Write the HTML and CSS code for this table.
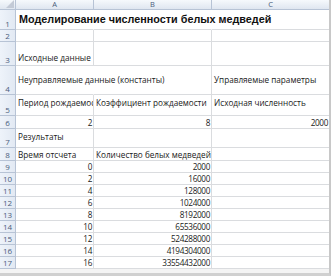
FILE: index.html
```html
<!DOCTYPE html>
<html>
<head>
<meta charset="utf-8">
<link rel="stylesheet" href="styles.css">
</head>
<body>
<div class="sheet">
  <div class="grid">
    <div class="hd corner"><svg class="tri" width="9" height="8" viewBox="0 0 9 8"><polygon points="9,0 9,8 1,8" fill="#c3cad6"/></svg></div>
    <div class="hd col">A</div>
    <div class="hd col">B</div>
    <div class="hd col">C</div>

    <div class="hd rn">1</div>
    <div class="c title nob">Моделирование численности белых медведей</div>
    <div class="c nob"></div>
    <div class="c"></div>

    <div class="hd rn">2</div>
    <div class="c"></div><div class="c"></div><div class="c"></div>

    <div class="hd rn">3</div>
    <div class="c bottom">Исходные данные</div>
    <div class="c"></div><div class="c"></div>

    <div class="hd rn">4</div>
    <div class="c mid nob">Неуправляемые данные (константы)</div>
    <div class="c"></div>
    <div class="c mid">Управляемые параметры</div>

    <div class="hd rn">5</div>
    <div class="c top clip">Период рождаемос</div>
    <div class="c top">Коэффициент рождаемости</div>
    <div class="c top">Исходная численность</div>

    <div class="hd rn">6</div>
    <div class="c num">2</div>
    <div class="c num">8</div>
    <div class="c num">2000</div>

    <div class="hd rn">7</div>
    <div class="c top">Результаты</div>
    <div class="c"></div><div class="c"></div>

    <div class="hd rn">8</div>
    <div class="c">Время отсчета</div>
    <div class="c">Количество белых медведей</div>
    <div class="c"></div>

    <div class="hd rn">9</div><div class="c num">0</div><div class="c num">2000</div><div class="c"></div>
    <div class="hd rn">10</div><div class="c num">2</div><div class="c num">16000</div><div class="c"></div>
    <div class="hd rn">11</div><div class="c num">4</div><div class="c num">128000</div><div class="c"></div>
    <div class="hd rn">12</div><div class="c num">6</div><div class="c num">1024000</div><div class="c"></div>
    <div class="hd rn">13</div><div class="c num">8</div><div class="c num">8192000</div><div class="c"></div>
    <div class="hd rn">14</div><div class="c num">10</div><div class="c num">65536000</div><div class="c"></div>
    <div class="hd rn">15</div><div class="c num">12</div><div class="c num">524288000</div><div class="c"></div>
    <div class="hd rn">16</div><div class="c num">14</div><div class="c num">4194304000</div><div class="c"></div>
    <div class="hd rn">17</div><div class="c num">16</div><div class="c num">33554432000</div><div class="c"></div>
  </div>
</div>
</body>
</html>
```

FILE: styles.css
```css
html, body {
  margin: 0;
  padding: 0;
  background: #ffffff;
}
.sheet {
  width: 331px;
  height: 276px;
  overflow: hidden;
  background: #f4f4f4;
  box-sizing: border-box;
  border-right: 2px solid #c8c8c8;
  border-bottom: 3px solid #d0d0d0;
}
.grid {
  display: grid;
  grid-template-columns: 16px 78px 118px 118px;
  grid-template-rows: 10px 20px 12px 24px 29px 21px 13px 19px 13px repeat(9, 12px);
  background: #ffffff;
  font-family: "Open Sans", "Noto Sans", sans-serif;
  font-size: 8.2px;
  color: #1a1a1a;
}
.hd {
  box-sizing: border-box;
  background: linear-gradient(#f6f9fc, #dfe6f0);
  border-right: 1px solid #b7c3d5;
  border-bottom: 1px solid #b7c3d5;
  color: #4a5d7c;
  font-size: 8px;
  display: flex;
  align-items: center;
  justify-content: center;
  line-height: 1;
}
.corner {
  justify-content: flex-end;
  align-items: flex-end;
  padding: 0 1px 1px 0;
}
.col {
  font-size: 7.5px;
}
.rn {
  align-items: flex-end;
  padding-bottom: 1px;
  background: linear-gradient(90deg, #eef3fa, #e2e9f3);
}
.c {
  box-sizing: border-box;
  border-right: 1px solid #dadcdf;
  border-bottom: 1px solid #dadcdf;
  white-space: nowrap;
  padding: 0 2px 1px 2px;
  display: flex;
  align-items: flex-end;
  line-height: 1;
}
.nob {
  border-right-color: transparent;
}
.title {
  font-family: "Liberation Sans", Arial, sans-serif;
  font-weight: 700;
  font-size: 10.8px;
  align-items: center;
  padding-bottom: 0;
  padding-left: 3px;
  color: #111;
}
.bottom { align-items: flex-end; padding-bottom: 3px; }
.mid { align-items: center; padding-bottom: 0; }
.top { align-items: flex-start; padding-top: 4px; padding-bottom: 0; }
.clip { overflow: hidden; }
.num { justify-content: flex-end; letter-spacing: -0.35px; padding-right: 1px; }
```
